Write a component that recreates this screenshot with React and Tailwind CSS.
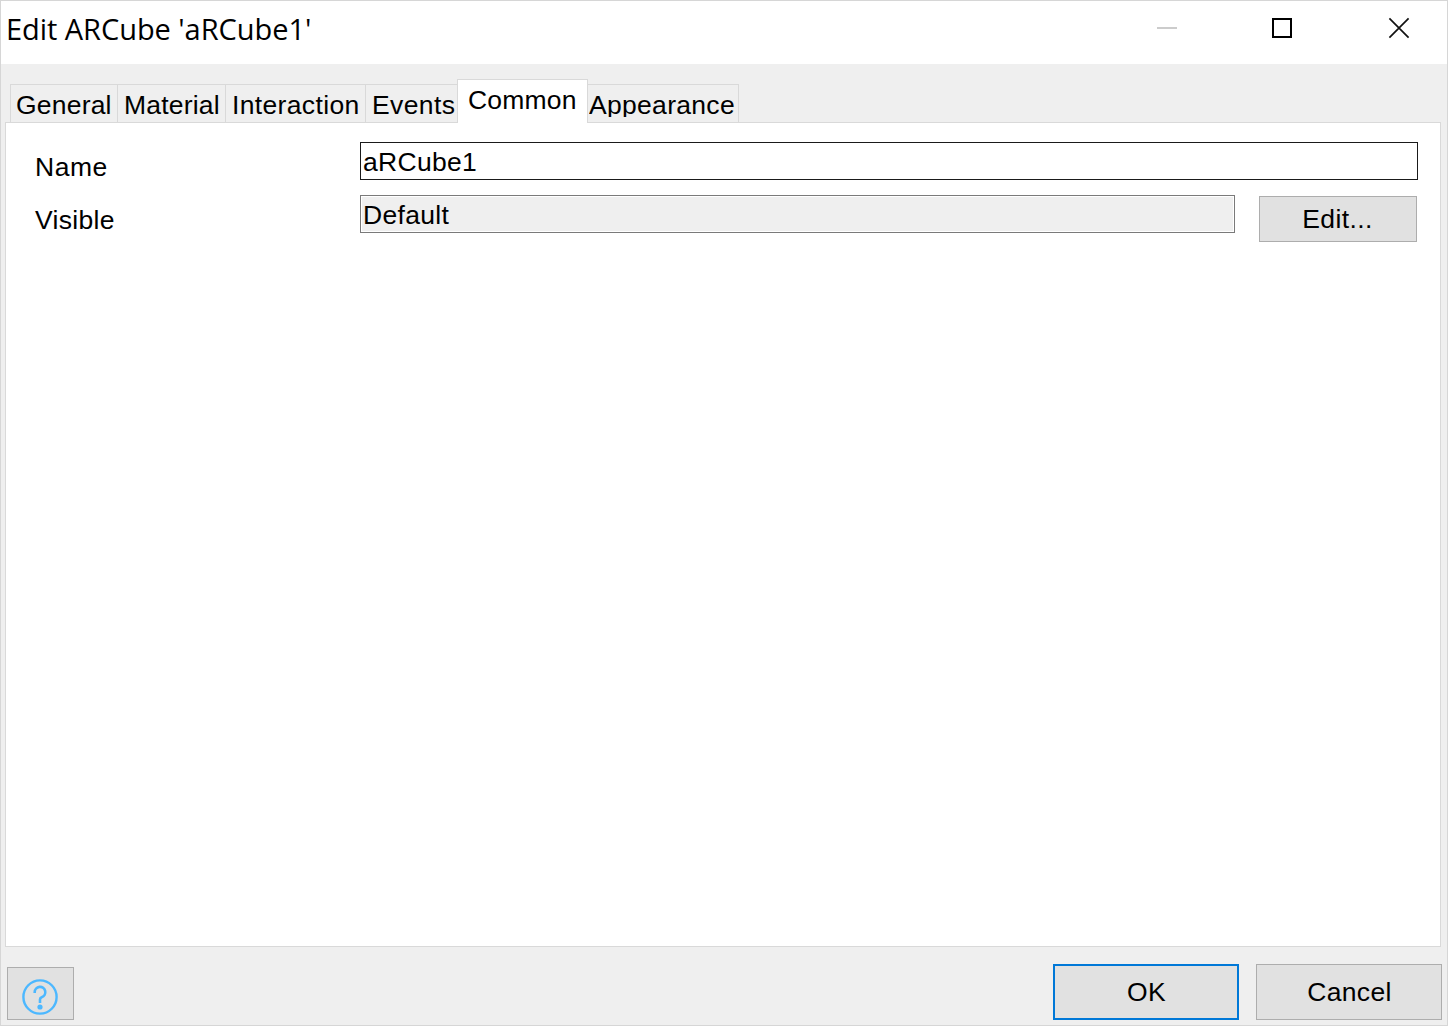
const tabs = [
  { label: "General", box: "h-[38px] w-[107px] border-l pl-[5px] pt-[5px]", text: "tracking-[0.2px]" },
  { label: "Material", box: "h-[38px] w-[108px] border-l pl-[6px] pt-[5px]", text: "tracking-[0.2px]" },
  { label: "Interaction", box: "h-[38px] w-[140px] border-l pl-[6px] pt-[5px]", text: "tracking-[0.35px]" },
  { label: "Events", box: "h-[38px] w-[92px] border-l pl-[6px] pt-[5px]", text: "tracking-[0.4px]" },
  { label: "Common", active: true, box: "-mb-px h-[44px] w-[131px] border-x bg-white pl-[10px] pt-[5px]", text: "tracking-[0.2px]" },
  { label: "Appearance", box: "h-[38px] w-[151px] border-r pl-[1px] pt-[5px]", text: "h-[27px] overflow-hidden tracking-[0.3px]" },
];

function TitleBar() {
  return (
    <header className="flex h-[63px] shrink-0 items-start justify-between bg-white">
      <h1 className="pl-[5px] pt-[8px] font-['Open_Sans'] text-[29px] leading-[40px] tracking-[-0.05px] whitespace-nowrap">
        Edit ARCube 'aRCube1'
      </h1>
      <div className="flex items-center pr-[37px] pt-[16px]">
        <button aria-label="Minimize" className="flex h-[22px] w-[20px] items-center">
          <span className="h-[2px] w-full bg-[#cccccc]" />
        </button>
        <button aria-label="Maximize" className="ml-[95px] flex h-[22px] w-[20px] items-center">
          <span className="size-[20px] border-2 border-black" />
        </button>
        <button aria-label="Close" className="ml-[96px]">
          <svg width="22" height="22" viewBox="0 0 22 22" fill="none" stroke="#111" strokeWidth="1.7">
            <path d="M1.4 1.4 20.6 20.6M20.6 1.4 1.4 20.6" />
          </svg>
        </button>
      </div>
    </header>
  );
}

function Tabs() {
  return (
    <nav className="relative z-10 flex h-[58px] shrink-0 items-end pl-[9px]" role="tablist">
      {tabs.map((t) => (
        <button
          key={t.label}
          role="tab"
          aria-selected={!!t.active}
          className={`flex shrink-0 items-start border-t border-[#d9d9d9] whitespace-nowrap ${t.box}`}
        >
          <span className={t.text}>{t.label}</span>
        </button>
      ))}
    </nav>
  );
}

function HelpIcon() {
  return (
    <svg width="36" height="36" viewBox="0 0 36 36" fill="none" stroke="#4db8ff">
      <circle cx="18" cy="18" r="16.6" strokeWidth="2.4" />
      <path d="M12.7 14v-.9a5.3 5.3 0 1 1 7 5.1c-1.2.4-1.7 1.1-1.7 2.3V24" strokeWidth="2.6" />
      <circle cx="18" cy="28" r="2.6" fill="#4db8ff" stroke="none" />
    </svg>
  );
}

export default function App() {
  return (
    <div className="flex h-[1026px] w-[1448px] flex-col overflow-hidden border border-[#d6d6d6] bg-[#efefef] font-['Liberation_Sans',sans-serif] text-[26.5px] leading-[30px] tracking-[0.3px] text-black">
      <TitleBar />
      <Tabs />
      <main className="mr-[6px] ml-[4px] h-[825px] shrink-0 border border-[#d9d9d9] bg-white pt-[19px] pl-[29px]">
        <div className="flex h-[53px] items-start">
          <label className="w-[325px] pt-[10px] tracking-[0.5px]">Name</label>
          <div className="h-[38px] w-[1058px] border border-[#1a1a1a] bg-white pt-[4px] pl-[2px]">aRCube1</div>
        </div>
        <div className="flex items-start">
          <label className="w-[325px] pt-[10px]">Visible</label>
          <div className="h-[38px] w-[875px] border border-[#7a7a7a] bg-white p-px">
            <div className="h-full bg-[#efefef] pt-[3px] pl-px">Default</div>
          </div>
          <button className="mt-px ml-[24px] flex h-[46px] w-[158px] items-start justify-center border border-[#adadad] bg-[#e1e1e1] pt-[7px] pr-[1px] tracking-[0.4px]">
            Edit...
          </button>
        </div>
      </main>
      <footer className="flex flex-1 items-end pr-[5px] pb-[5px] pl-[6px]">
        <button aria-label="Help" className="flex h-[53px] w-[67px] items-start border border-[#adadad] bg-[#e1e1e1] pt-[11px] pl-[14px]">
          <HelpIcon />
        </button>
        <button className="ml-auto flex h-[56px] w-[186px] items-start justify-center border-2 border-[#0078d7] bg-[#e1e1e1] pt-[11px] pl-px">
          OK
        </button>
        <button className="ml-[17px] flex h-[56px] w-[186px] items-start justify-center border border-[#adadad] bg-[#e1e1e1] pt-[12px] pl-px">
          Cancel
        </button>
      </footer>
    </div>
  );
}
